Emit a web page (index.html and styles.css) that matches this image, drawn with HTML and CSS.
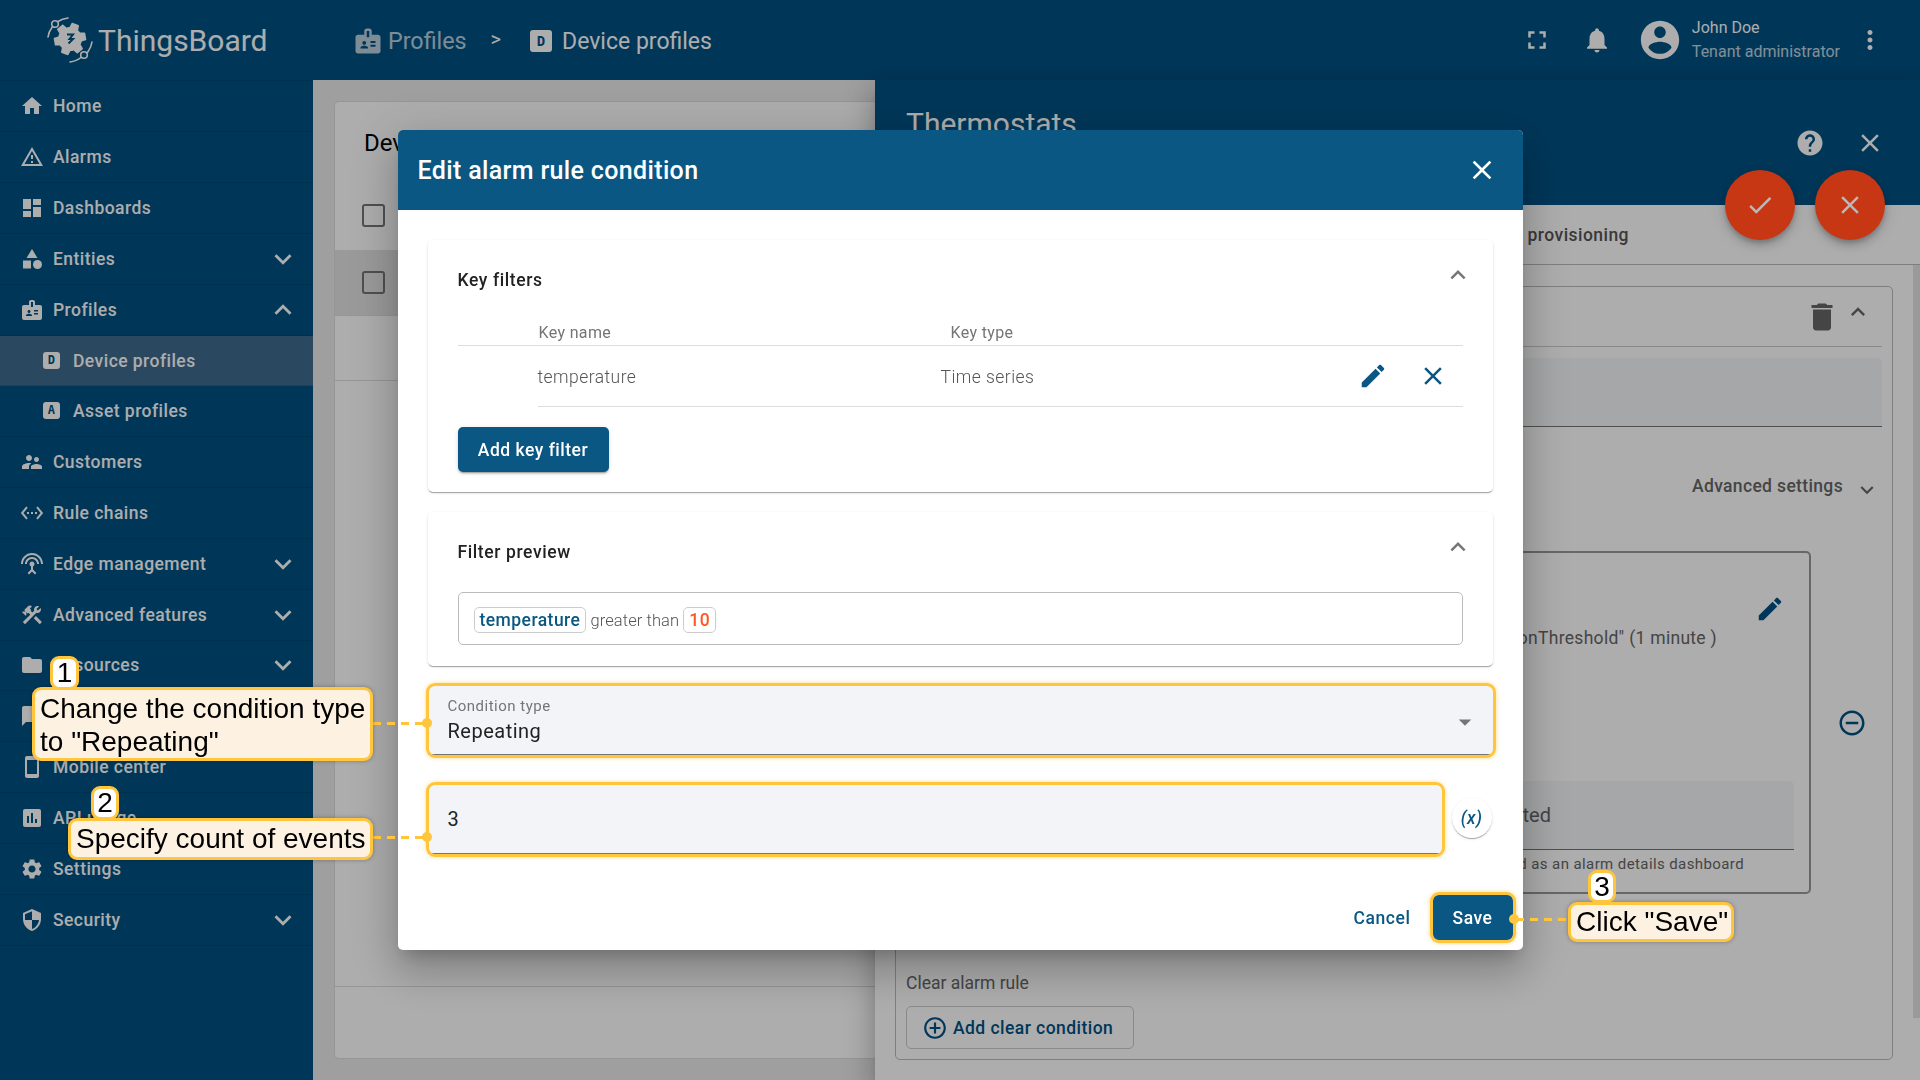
FILE: index.html
```html
<!DOCTYPE html>
<html lang="en">
<head>
    <meta charset="UTF-8">
    <title>Device profiles</title>
    <link rel="stylesheet" href="styles.css">
</head>
<body>
<svg class="sprite" xmlns="http://www.w3.org/2000/svg">
    <symbol id="i-home" viewBox="0 0 24 24"><path d="M10 20v-6h4v6h5v-8h3L12 3 2 12h3v8z"/></symbol>
    <symbol id="i-alarm" viewBox="0 0 24 24"><path d="M12 5.99L19.53 19H4.47L12 5.99M12 2L1 21h22L12 2zm1 14h-2v2h2v-2zm0-6h-2v4h2v-4z"/></symbol>
    <symbol id="i-dash" viewBox="0 0 24 24"><path d="M3 13h8V3H3v10zm0 8h8v-6H3v6zm10 0h8V11h-8v10zm0-18v6h8V3h-8z"/></symbol>
    <symbol id="i-entities" viewBox="0 0 24 24"><path d="M12 2l-5.5 9h11z"/><circle cx="17.5" cy="17.5" r="4.5"/><path d="M3 13.5h8v8H3z"/></symbol>
    <symbol id="i-badge" viewBox="0 0 24 24"><path d="M20 7h-5V4c0-1.1-.9-2-2-2h-2c-1.1 0-2 .9-2 2v3H4c-1.1 0-2 .9-2 2v11c0 1.1.9 2 2 2h16c1.1 0 2-.9 2-2V9c0-1.1-.9-2-2-2zM9 12c.83 0 1.5.67 1.5 1.5S9.83 15 9 15s-1.5-.67-1.5-1.5S8.17 12 9 12zm3 6H6v-.75c0-1 2-1.5 3-1.5s3 .5 3 1.5V18zm1-9h-2V4h2v5zm5 7.5h-4V15h4v1.5zm0-3h-4V12h4v1.5z"/></symbol>
    <symbol id="i-customers" viewBox="0 0 24 24"><path d="M16.5 12c1.38 0 2.49-1.12 2.49-2.5S17.88 7 16.5 7C15.12 7 14 8.12 14 9.5s1.12 2.5 2.5 2.5zM9 11c1.66 0 2.99-1.34 2.99-3S10.66 5 9 5C7.34 5 6 6.34 6 8s1.34 3 3 3zm7.5 3c-1.83 0-5.5.92-5.5 2.75V19h11v-2.25c0-1.83-3.67-2.75-5.5-2.75zM9 13c-2.33 0-7 1.17-7 3.5V19h7v-2.25c0-.85.33-2.34 2.37-3.47C10.5 13.1 9.66 13 9 13z"/></symbol>
    <symbol id="i-rule" viewBox="0 0 24 24"><path d="M7.77 6.76L6.23 5.48.82 12l5.41 6.52 1.54-1.28L3.42 12l4.35-5.24zM7 13h2v-2H7v2zm10-2h-2v2h2v-2zm-6 2h2v-2h-2v2zm6.77-7.52l-1.54 1.28L20.58 12l-4.35 5.24 1.54 1.28L23.18 12l-5.41-6.52z"/></symbol>
    <symbol id="i-edge" viewBox="0 0 24 24"><path d="M12 5c-3.87 0-7 3.13-7 7h2c0-2.76 2.24-5 5-5s5 2.24 5 5h2c0-3.87-3.13-7-7-7zm1 9.29c.88-.39 1.5-1.26 1.5-2.29 0-1.38-1.12-2.5-2.5-2.5S9.5 10.62 9.5 12c0 1.02.62 1.9 1.5 2.29v3.3L7.59 21 9 22.41l3-3 3 3L16.41 21 13 17.59v-3.3zM12 1C5.93 1 1 5.93 1 12h2c0-4.97 4.03-9 9-9s9 4.03 9 9h2c0-6.07-4.93-11-11-11z"/></symbol>
    <symbol id="i-tools" viewBox="0 0 24 24"><path d="M13.783 15.172l2.121-2.121 5.996 5.996-2.121 2.121zM17.5 10c1.93 0 3.5-1.57 3.5-3.5 0-.58-.16-1.12-.41-1.6l-2.7 2.7-1.49-1.49 2.7-2.7c-.48-.25-1.02-.41-1.6-.41C15.57 3 14 4.57 14 6.5c0 .41.08.8.21 1.16l-1.85 1.85-1.78-1.78.71-.71-1.41-1.41L12 3.49c-1.17-1.17-3.07-1.17-4.24 0L4.22 7.03l1.41 1.41H2.81l-.71.71 3.54 3.54.71-.71V9.15l1.41 1.41.71-.71 1.78 1.78-7.41 7.41 2.12 2.12L16.34 9.79c.36.13.75.21 1.16.21z"/></symbol>
    <symbol id="i-folder" viewBox="0 0 24 24"><path d="M10 4H4c-1.1 0-1.99.9-1.99 2L2 18c0 1.1.9 2 2 2h16c1.1 0 2-.9 2-2V8c0-1.1-.9-2-2-2h-8l-2-2z"/></symbol>
    <symbol id="i-chat" viewBox="0 0 24 24"><path d="M20 2H4c-1.1 0-2 .9-2 2v18l4-4h14c1.1 0 2-.9 2-2V4c0-1.1-.9-2-2-2z"/></symbol>
    <symbol id="i-phone" viewBox="0 0 24 24"><path d="M17 1.01L7 1c-1.1 0-2 .9-2 2v18c0 1.1.9 2 2 2h10c1.1 0 2-.9 2-2V3c0-1.1-.9-1.99-2-1.99zM17 19H7V5h10v14z"/></symbol>
    <symbol id="i-chart" viewBox="0 0 24 24"><path d="M19 3H5c-1.1 0-2 .9-2 2v14c0 1.1.9 2 2 2h14c1.1 0 2-.9 2-2V5c0-1.1-.9-2-2-2zM9 17H7v-7h2v7zm4 0h-2V7h2v10zm4 0h-2v-4h2v4z"/></symbol>
    <symbol id="i-gear" viewBox="0 0 24 24"><path d="M19.14 12.94c.04-.3.06-.61.06-.94 0-.32-.02-.64-.07-.94l2.03-1.58c.18-.14.23-.41.12-.61l-1.92-3.32c-.12-.22-.37-.29-.59-.22l-2.39.96c-.5-.38-1.03-.7-1.62-.94l-.36-2.54c-.04-.24-.24-.41-.48-.41h-3.84c-.24 0-.43.17-.47.41l-.36 2.54c-.59.24-1.13.57-1.62.94l-2.39-.96c-.22-.08-.47 0-.59.22L2.74 8.87c-.12.21-.08.47.12.61l2.03 1.58c-.05.3-.09.63-.09.94s.02.64.07.94l-2.03 1.58c-.18.14-.23.41-.12.61l1.92 3.32c.12.22.37.29.59.22l2.39-.96c.5.38 1.03.7 1.62.94l.36 2.54c.05.24.24.41.48.41h3.84c.24 0 .44-.17.47-.41l.36-2.54c.59-.24 1.13-.56 1.62-.94l2.39.96c.22.08.47 0 .59-.22l1.92-3.32c.12-.22.07-.47-.12-.61l-2.01-1.58zM12 15.6c-1.98 0-3.6-1.62-3.6-3.6s1.62-3.6 3.6-3.6 3.6 1.62 3.6 3.6-1.62 3.6-3.6 3.6z"/></symbol>
    <symbol id="i-shield" viewBox="0 0 24 24"><path d="M12 1L3 5v6c0 5.55 3.84 10.74 9 12 5.16-1.26 9-6.45 9-12V5l-9-4zm0 10.99h7c-.53 4.12-3.28 7.79-7 8.94V12H5V6.3l7-3.11v8.8z"/></symbol>
    <symbol id="i-more" viewBox="0 0 24 24"><path d="M16.59 8.59L12 13.17 7.41 8.59 6 10l6 6 6-6z"/></symbol>
    <symbol id="i-less" viewBox="0 0 24 24"><path d="M12 8l-6 6 1.41 1.41L12 10.83l4.59 4.58L18 14z"/></symbol>
    <symbol id="i-full" viewBox="0 0 24 24"><path d="M7 14H5v5h5v-2H7v-3zm-2-4h2V7h3V5H5v5zm12 7h-3v2h5v-5h-2v3zM14 5v2h3v3h2V5h-5z"/></symbol>
    <symbol id="i-bell" viewBox="0 0 24 24"><path d="M12 22c1.1 0 2-.9 2-2h-4c0 1.1.89 2 2 2zm6-6v-5c0-3.07-1.64-5.64-4.5-6.32V4c0-.83-.67-1.5-1.5-1.5s-1.5.67-1.5 1.5v.68C7.63 5.36 6 7.92 6 11v5l-2 2v1h16v-1l-2-2z"/></symbol>
    <symbol id="i-user" viewBox="0 0 24 24"><path d="M12 2C6.48 2 2 6.48 2 12s4.48 10 10 10 10-4.48 10-10S17.52 2 12 2zm0 3c1.66 0 3 1.34 3 3s-1.34 3-3 3-3-1.34-3-3 1.34-3 3-3zm0 14.2c-2.5 0-4.71-1.28-6-3.22.03-1.99 4-3.08 6-3.08 1.99 0 5.97 1.09 6 3.08-1.29 1.94-3.5 3.22-6 3.22z"/></symbol>
    <symbol id="i-vert" viewBox="0 0 24 24"><path d="M12 8c1.1 0 2-.9 2-2s-.9-2-2-2-2 .9-2 2 .9 2 2 2zm0 2c-1.1 0-2 .9-2 2s.9 2 2 2 2-.9 2-2-.9-2-2-2zm0 6c-1.1 0-2 .9-2 2s.9 2 2 2 2-.9 2-2-.9-2-2-2z"/></symbol>
    <symbol id="i-help" viewBox="0 0 24 24"><path d="M12 2C6.48 2 2 6.48 2 12s4.48 10 10 10 10-4.48 10-10S17.52 2 12 2zm1 17h-2v-2h2v2zm2.07-7.75l-.9.92C13.45 12.9 13 13.5 13 15h-2v-.5c0-1.1.45-2.1 1.17-2.83l1.24-1.26c.37-.36.59-.86.59-1.41 0-1.1-.9-2-2-2s-2 .9-2 2H8c0-2.21 1.79-4 4-4s4 1.79 4 4c0 .88-.36 1.68-.93 2.25z"/></symbol>
    <symbol id="i-close" viewBox="0 0 24 24"><path d="M19 6.41L17.59 5 12 10.59 6.41 5 5 6.41 10.59 12 5 17.59 6.41 19 12 13.41 17.59 19 19 17.59 13.41 12z"/></symbol>
    <symbol id="i-check" viewBox="0 0 24 24"><path d="M9 16.17L4.83 12l-1.42 1.41L9 19 21 7l-1.41-1.41z"/></symbol>
    <symbol id="i-edit" viewBox="0 0 24 24"><path d="M3 17.25V21h3.75L17.81 9.94l-3.75-3.75L3 17.25zM20.71 7.04c.39-.39.39-1.02 0-1.41l-2.34-2.34c-.39-.39-1.02-.39-1.41 0l-1.83 1.83 3.75 3.75 1.83-1.83z"/></symbol>
    <symbol id="i-delete" viewBox="0 0 24 24"><path d="M6 19c0 1.1.9 2 2 2h8c1.1 0 2-.9 2-2V7H6v12zM19 4h-3.5l-1-1h-5l-1 1H5v2h14V4z"/></symbol>
    <symbol id="i-minus" viewBox="0 0 24 24"><path d="M7 11v2h10v-2H7zm5-9C6.48 2 2 6.48 2 12s4.48 10 10 10 10-4.48 10-10S17.52 2 12 2zm0 18c-4.41 0-8-3.59-8-8s3.59-8 8-8 8 3.59 8 8-3.59 8-8 8z"/></symbol>
    <symbol id="i-plus" viewBox="0 0 24 24"><path d="M13 7h-2v4H7v2h4v4h2v-4h4v-2h-4V7zm-1-5C6.48 2 2 6.48 2 12s4.48 10 10 10 10-4.48 10-10S17.52 2 12 2zm0 18c-4.41 0-8-3.59-8-8s3.59-8 8-8 8 3.59 8 8-3.59 8-8 8z"/></symbol>
    <symbol id="i-drop" viewBox="0 0 24 24"><path d="M7 10l5 5 5-5z"/></symbol>
</svg>

<div class="app">
    <aside class="sidebar">
        <div class="logo">
            <svg class="logo-mark" viewBox="0 0 46 46">
                <g fill="none" stroke="currentColor" stroke-width="1.6" stroke-linecap="round">
                    <circle cx="8" cy="7" r="3.3"/>
                    <circle cx="37" cy="38" r="3.3"/>
                    <path d="M11 4.500C14 2.500 17 1.500 21 1"/>
                    <path d="M5.500 9.500C3 13 1.500 16 1 20"/>
                    <path d="M34 40.500C31 43 27 44.500 23 45"/>
                    <path d="M40.500 35.500C43 32 44.500 29 45 25"/>
                </g>
                <use href="#i-gear" x="3" y="2" width="40" height="40" transform="rotate(20 23 22)"/>
                <circle cx="23" cy="22" r="9"/>
                <path class="logo-tick" d="M20 17.500h6l-3.500 4.500h3.500l-4.500 4.500"/>
            </svg>
            <span class="logo-text">ThingsBoard</span>
        </div>
        <nav class="nav">
            <a class="nav-item"><svg class="ico"><use href="#i-home"/></svg><span>Home</span></a>
            <a class="nav-item"><svg class="ico"><use href="#i-alarm"/></svg><span>Alarms</span></a>
            <a class="nav-item"><svg class="ico"><use href="#i-dash"/></svg><span>Dashboards</span></a>
            <a class="nav-item"><svg class="ico"><use href="#i-entities"/></svg><span>Entities</span><svg class="ico-arrow"><use href="#i-more"/></svg></a>
            <a class="nav-item"><svg class="ico"><use href="#i-badge"/></svg><span>Profiles</span><svg class="ico-arrow"><use href="#i-less"/></svg></a>
            <a class="nav-item sub current"><i class="sub-icon">D</i><span>Device profiles</span></a>
            <a class="nav-item sub"><i class="sub-icon">A</i><span>Asset profiles</span></a>
            <a class="nav-item"><svg class="ico"><use href="#i-customers"/></svg><span>Customers</span></a>
            <a class="nav-item"><svg class="ico"><use href="#i-rule"/></svg><span>Rule chains</span></a>
            <a class="nav-item"><svg class="ico"><use href="#i-edge"/></svg><span>Edge management</span><svg class="ico-arrow"><use href="#i-more"/></svg></a>
            <a class="nav-item"><svg class="ico"><use href="#i-tools"/></svg><span>Advanced features</span><svg class="ico-arrow"><use href="#i-more"/></svg></a>
            <a class="nav-item"><svg class="ico"><use href="#i-folder"/></svg><span>Resources</span><svg class="ico-arrow"><use href="#i-more"/></svg></a>
            <a class="nav-item"><svg class="ico"><use href="#i-chat"/></svg><span>Notification center</span></a>
            <a class="nav-item"><svg class="ico"><use href="#i-phone"/></svg><span>Mobile center</span></a>
            <a class="nav-item"><svg class="ico"><use href="#i-chart"/></svg><span>API usage</span></a>
            <a class="nav-item"><svg class="ico"><use href="#i-gear"/></svg><span>Settings</span></a>
            <a class="nav-item"><svg class="ico"><use href="#i-shield"/></svg><span>Security</span><svg class="ico-arrow"><use href="#i-more"/></svg></a>
        </nav>
    </aside>

    <main class="main">
        <header class="toolbar">
            <div class="crumbs">
                <svg class="crumb-icon dim"><use href="#i-badge"/></svg>
                <span class="crumb dim">Profiles</span>
                <span class="crumb-sep">&gt;</span>
                <i class="crumb-letter">D</i>
                <span class="crumb">Device profiles</span>
            </div>
            <div class="tools">
                <svg class="tool-ico full"><use href="#i-full"/></svg>
                <svg class="tool-ico bell"><use href="#i-bell"/></svg>
                <svg class="avatar"><use href="#i-user"/></svg>
                <div class="who">
                    <div class="who-name">John Doe</div>
                    <div class="who-role">Tenant administrator</div>
                </div>
                <svg class="tool-ico vert"><use href="#i-vert"/></svg>
            </div>
        </header>
        <section class="content">
            <div class="list-card">
                <div class="list-title">Device profiles</div>
                <div class="list-row head"><span class="checkbox"></span></div>
                <div class="list-row selected"><span class="checkbox"></span></div>
                <div class="list-row"></div>
                <div class="list-space"></div>
                <div class="list-foot"></div>
            </div>
        </section>
    </main>

    <aside class="drawer">
        <div class="drawer-head">
            <div class="drawer-title">Thermostats</div>
            <svg class="head-ico help"><use href="#i-help"/></svg>
            <svg class="head-ico close"><use href="#i-close"/></svg>
        </div>
        <button class="fab check"><svg><use href="#i-check"/></svg></button>
        <button class="fab cancel"><svg><use href="#i-close"/></svg></button>
        <div class="drawer-tabs"><span>Device provisioning</span></div>
        <div class="drawer-scroll">
            <div class="rule-card">
                <div class="rule-head">
                    <svg class="rule-del"><use href="#i-delete"/></svg>
                    <svg class="rule-less"><use href="#i-less"/></svg>
                </div>
                <div class="rule-field"></div>
                <div class="rule-adv"><span>Advanced settings</span><svg><use href="#i-more"/></svg></div>
                <div class="rule-cond">
                    <div class="cond-box">
                        <svg class="cond-edit"><use href="#i-edit"/></svg>
                        <div class="cond-text">temperature during "durationThreshold" (1 minute )</div>
                        <div class="cond-field"><span>Not selected</span></div>
                        <div class="cond-hint">Used as an alarm details dashboard</div>
                    </div>
                    <svg class="cond-minus"><use href="#i-minus"/></svg>
                </div>
                <div class="clear-label">Clear alarm rule</div>
                <button class="clear-btn"><svg><use href="#i-plus"/></svg>Add clear condition</button>
            </div>
            <div class="scrollbar"></div>
        </div>
    </aside>
</div>

<div class="backdrop"></div>

<div class="dialog-wrap">
    <div class="dialog">
        <div class="dialog-head">
            <h2>Edit alarm rule condition</h2>
            <svg class="dialog-close"><use href="#i-close"/></svg>
        </div>
        <div class="dialog-body">
            <div class="panel">
                <div class="panel-head"><span>Key filters</span><svg><use href="#i-less"/></svg></div>
                <div class="key-head"><span class="col-name">Key name</span><span>Key type</span></div>
                <div class="key-row">
                    <span class="col-value">temperature</span>
                    <span>Time series</span>
                    <div class="key-actions">
                        <svg><use href="#i-edit"/></svg>
                        <svg><use href="#i-close"/></svg>
                    </div>
                </div>
                <button class="btn add-key">Add key filter</button>
            </div>
            <div class="panel">
                <div class="panel-head"><span>Filter preview</span><svg><use href="#i-less"/></svg></div>
                <div class="preview">
                    <span class="chip key">temperature</span>
                    <span class="op">greater than</span>
                    <span class="chip val">10</span>
                </div>
            </div>
            <div class="field select">
                <label>Condition type</label>
                <div class="field-value">Repeating</div>
                <svg><use href="#i-drop"/></svg>
            </div>
            <div class="count-row">
                <div class="field count"><div class="field-value">3</div></div>
                <button class="var-btn">(x)</button>
            </div>
            <div class="dialog-foot">
                <button class="btn-text">Cancel</button>
                <button class="btn save">Save</button>
            </div>
        </div>
    </div>
</div>

<div class="notes">
    <div class="ring ring-type"></div>
    <div class="ring ring-count"></div>
    <div class="ring ring-save"></div>
    <div class="dash dash-1"></div>
    <div class="dash dash-2"></div>
    <div class="dash dash-3"></div>
    <div class="dot dot-1"></div>
    <div class="dot dot-2"></div>
    <div class="dot dot-3"></div>
    <div class="callout call-1">Change the condition type<br>to "Repeating"</div>
    <div class="badge badge-1">1</div>
    <div class="callout call-2">Specify count of events</div>
    <div class="badge badge-2">2</div>
    <div class="callout call-3">Click "Save"</div>
    <div class="badge badge-3">3</div>
</div>
</body>
</html>
```

FILE: styles.css
```css
* {
    box-sizing: border-box;
    margin: 0;
    padding: 0;
}

html, body {
    width: 1920px;
    height: 1080px;
    overflow: hidden;
}

body {
    font-family: Roboto, "Liberation Sans", sans-serif;
    color: #222;
    background: #eaeaea;
}

button {
    border: 0;
    background: none;
    font-family: inherit;
}

svg {
    fill: currentColor;
    display: block;
}

.sprite {
    display: none;
}

.app {
    display: flex;
    width: 1920px;
    height: 1080px;
    position: relative;
}

/* sidebar */
.sidebar {
    width: 313px;
    flex: none;
    background: #005184;
    color: #fff;
}

.logo {
    height: 81px;
    display: flex;
    align-items: center;
    padding-left: 47px;
    border-bottom: 1px solid rgba(0, 0, 0, .1);
}

.logo-mark {
    width: 46px;
    height: 46px;
    margin-right: 5px;
}

.logo-tick {
    fill: none;
    stroke: #005184;
    stroke-width: 2;
}

.logo-text {
    font-size: 30px;
}

.nav-item {
    height: 50.97px;
    display: flex;
    align-items: center;
    padding-left: 20px;
    font-size: 17.5px;
    font-weight: 500;
    letter-spacing: .45px;
    border-bottom: 1px solid rgba(0, 0, 0, .1);
}

.nav-item .ico {
    width: 24px;
    height: 24px;
    margin-right: 9px;
    flex: none;
}

.ico-arrow {
    width: 34px;
    height: 34px;
    margin-left: auto;
    margin-right: 13px;
}

.nav-item.sub {
    height: 50.4px;
    padding-left: 43px;
}

.nav-item.current {
    background: #3e6a8e;
}

.sub-icon {
    width: 17px;
    height: 17px;
    margin-right: 13px;
    flex: none;
    border-radius: 3px;
    background: #fff;
    color: #005184;
    font: 700 12px/17px "DejaVu Sans Mono", monospace;
    text-align: center;
}

/* top bar */
.main {
    flex: 1;
    display: flex;
    flex-direction: column;
    min-width: 0;
}

.toolbar {
    height: 80px;
    flex: none;
    background: #005184;
    color: #fff;
    display: flex;
    align-items: center;
    justify-content: space-between;
    padding-left: 40px;
}

.crumbs {
    display: flex;
    align-items: center;
    font-size: 23.3px;
    padding-top: 2px;
}

.crumb-icon {
    width: 30px;
    height: 30px;
    margin-right: 5px;
}

.crumb:last-child {
    font-size: 23px;
}

.dim {
    opacity: .72;
}

.crumb-sep {
    font-size: 20px;
    margin: 0 29px 4px 24px;
}

.crumb-letter {
    width: 22px;
    height: 22px;
    margin-right: 10px;
    border-radius: 3px;
    background: #fff;
    color: #005184;
    font: 700 14px/22px "DejaVu Sans Mono", monospace;
    text-align: center;
}

.tools {
    display: flex;
    align-items: center;
    padding-right: 35px;
}

.tool-ico {
    width: 30px;
    height: 30px;
}

.tool-ico.bell {
    margin-left: 30px;
}

.avatar {
    width: 46px;
    height: 46px;
    margin-left: 25px;
}

.who {
    margin-left: 9px;
    font-size: 16px;
    line-height: 24px;
}

.who-role {
    opacity: .75;
}

.tool-ico.vert {
    margin-left: 15px;
}

/* device profile list behind the drawer */
.content {
    flex: 1;
    padding: 21px;
    min-height: 0;
}

.list-card {
    height: 100%;
    background: #fff;
    border-radius: 5px;
    border: 1px solid #ddd;
    display: flex;
    flex-direction: column;
}

.list-title {
    height: 81px;
    flex: none;
    padding: 21px 0 0 29px;
    font-size: 24px;
    line-height: 40px;
    color: #000;
}

.list-row {
    height: 65px;
    flex: none;
    display: flex;
    align-items: center;
    padding-left: 27px;
    border-bottom: 1px solid #ddd;
}

.list-row.head {
    height: 67px;
    padding-bottom: 2px;
    border-bottom: 0;
}

.list-row.selected {
    height: 66px;
    background: #e3e3e3;
}

.checkbox {
    width: 23px;
    height: 23px;
    border: 2px solid #757575;
    border-radius: 3px;
}

.list-space {
    flex: 1;
    border-bottom: 1px solid #ddd;
}

.list-foot {
    height: 71px;
    flex: none;
}

/* right drawer */
.drawer {
    position: absolute;
    left: 875px;
    top: 80px;
    right: 0;
    bottom: 0;
    background: #fff;
    display: flex;
    flex-direction: column;
    box-shadow: 0 8px 10px -5px rgba(0, 0, 0, .2), 0 16px 24px 2px rgba(0, 0, 0, .14), 0 6px 30px 5px rgba(0, 0, 0, .12);
}

.drawer-head {
    height: 125px;
    flex: none;
    background: #005184;
    color: #fff;
    display: flex;
    align-items: flex-start;
    padding: 0 35px 0 31px;
}

.drawer-title {
    flex: 1;
    margin-top: 24px;
    font-size: 30px;
    line-height: 40px;
}

.head-ico {
    margin-top: 48px;
    width: 30px;
    height: 30px;
}

.head-ico.close {
    margin-left: 30px;
}

/* the action buttons keep their colour above the backdrop */
.fab {
    position: absolute;
    z-index: 2;
    top: 90px;
    width: 70px;
    height: 70px;
    border-radius: 50%;
    background: #c83714;
    color: #b9b9b9;
    display: flex;
    align-items: center;
    justify-content: center;
    box-shadow: 0 3px 5px -1px rgba(0, 0, 0, .2), 0 6px 10px 0 rgba(0, 0, 0, .14), 0 1px 18px 0 rgba(0, 0, 0, .12);
}

.fab svg {
    width: 30px;
    height: 30px;
}

.fab.check {
    right: 125px;
}

.fab.cancel {
    right: 35px;
}

.drawer-tabs {
    height: 60px;
    flex: none;
    display: flex;
    align-items: center;
    justify-content: flex-end;
    padding-right: 291px;
    font-size: 17.5px;
    font-weight: 500;
    letter-spacing: .45px;
    color: #555;
    border-bottom: 1px solid #bbb;
}

.drawer-scroll {
    flex: 1;
    display: flex;
    min-height: 0;
    background: #fff;
}

.rule-card {
    flex: 1;
    margin: 21px 20px 20px 20px;
    padding: 0 10px;
    border: 1px solid #bbb;
    border-radius: 5px;
    display: flex;
    flex-direction: column;
}

.rule-head {
    height: 60px;
    flex: none;
    display: flex;
    align-items: flex-start;
    justify-content: flex-end;
    padding: 12px 10px 0 0;
    border-bottom: 1px solid #ccc;
    color: #666;
}

.rule-del {
    width: 36px;
    height: 36px;
    color: #666;
}

.rule-less {
    width: 28px;
    height: 28px;
    margin-left: 4px;
    margin-top: -1px;
}

.rule-field {
    height: 69px;
    flex: none;
    margin-top: 11px;
    background: #f5f6f8;
    border-bottom: 1px solid #757575;
    border-radius: 5px 5px 0 0;
}

.rule-adv {
    height: 124px;
    flex: none;
    padding: 49px 0 0 0;
    display: flex;
    justify-content: flex-end;
    font-size: 17.5px;
    font-weight: 500;
    letter-spacing: .35px;
    color: #666;
}

.rule-adv svg {
    width: 26px;
    height: 26px;
    margin: 1px 2px 0 11px;
    color: #666;
}

.rule-cond {
    height: 343px;
    flex: none;
    display: flex;
    align-items: center;
}

.cond-box {
    flex: 1;
    height: 100%;
    border: 2px solid #999;
    border-radius: 5px;
    display: flex;
    flex-direction: column;
    align-items: flex-end;
    color: #666;
}

.cond-edit {
    width: 30px;
    height: 30px;
    margin: 41px 24px 0 0;
    color: #005184;
}

.cond-text {
    margin: 1px 92px 0 0;
    font-size: 17.5px;
    line-height: 26px;
    letter-spacing: .3px;
}

.cond-field {
    height: 69px;
    width: calc(100% - 15px);
    margin: 130px 15px 0 0;
    display: flex;
    align-items: center;
    justify-content: flex-end;
    padding-right: 243px;
    background: #f5f6f8;
    border-bottom: 1px solid #757575;
    border-radius: 5px 5px 0 0;
    font-size: 20px;
}

.cond-hint {
    margin: 5px 65px 0 0;
    font-size: 15px;
    letter-spacing: .4px;
}

.cond-minus {
    width: 30px;
    height: 30px;
    margin: 0 15px 0 26px;
    color: #005184;
    flex: none;
}

.clear-label {
    margin-top: 77px;
    font-size: 17.5px;
    line-height: 24px;
    color: #666;
}

.clear-btn {
    width: 228px;
    height: 43px;
    margin-top: 11px;
    flex: none;
    display: flex;
    align-items: center;
    padding-left: 15px;
    border: 1px solid #ccc;
    border-radius: 5px;
    font-size: 17.5px;
    font-weight: 500;
    letter-spacing: .45px;
    color: #005184;
}

.clear-btn svg {
    width: 26px;
    height: 26px;
    margin-right: 5px;
}

.scrollbar {
    width: 7px;
    height: 753px;
    flex: none;
    background: #e3e3e3;
}

/* backdrop and dialog */
.backdrop {
    position: fixed;
    z-index: 1;
    inset: 0;
    background: rgba(0, 0, 0, .32);
}

.dialog-wrap {
    position: fixed;
    z-index: 3;
    inset: 0;
    display: flex;
    align-items: center;
    justify-content: center;
}

.dialog {
    width: 1125px;
    height: 820px;
    background: #fff;
    border-radius: 5px;
    overflow: hidden;
    display: flex;
    flex-direction: column;
    box-shadow: 0 11px 15px -7px rgba(0, 0, 0, .2), 0 24px 38px 3px rgba(0, 0, 0, .14), 0 9px 46px 8px rgba(0, 0, 0, .12);
}

.dialog-head {
    height: 80px;
    flex: none;
    background: #0a5783;
    color: #fff;
    display: flex;
    align-items: center;
    justify-content: space-between;
    padding: 0 25px 0 20px;
}

.dialog-head h2 {
    font-size: 25px;
    font-weight: 500;
    letter-spacing: .35px;
}

.dialog-close {
    width: 32px;
    height: 32px;
}

.dialog-body {
    flex: 1;
    padding: 30px 30px 0;
    display: flex;
    flex-direction: column;
}

.panel {
    padding: 0 30px 20px;
    border-radius: 5px;
    box-shadow: 0 2px 1px -1px rgba(0, 0, 0, .2), 0 1px 1px 0 rgba(0, 0, 0, .14), 0 1px 3px 0 rgba(0, 0, 0, .12);
    margin-bottom: 20px;
}

.panel-head {
    height: 80px;
    display: flex;
    align-items: center;
    justify-content: space-between;
    font-size: 17.5px;
    font-weight: 500;
    letter-spacing: .6px;
}

.panel-head svg {
    width: 30px;
    height: 30px;
    margin: 0 -10px 10px 0;
    color: #757575;
}

.key-head {
    height: 26px;
    display: flex;
    align-items: center;
    padding-left: 81px;
    font-size: 16px;
    letter-spacing: .35px;
    color: #757575;
    border-bottom: 1px solid #ddd;
}

.col-name {
    width: 412px;
}

.key-row {
    height: 61px;
    margin-left: 80px;
    padding-top: 2px;
    display: flex;
    align-items: center;
    font-size: 17.5px;
    font-weight: 300;
    letter-spacing: .45px;
    color: #555;
    border-bottom: 1px solid #ddd;
}

.col-value {
    width: 403px;
}

.key-actions {
    margin-left: auto;
    margin-top: -2px;
    padding-right: 15px;
    display: flex;
    gap: 30px;
    color: #0a5783;
}

.key-actions svg {
    width: 30px;
    height: 30px;
}

.btn {
    background: #0a5783;
    color: #fff;
    height: 45px;
    border-radius: 5px;
    font-size: 17.5px;
    font-weight: 500;
    letter-spacing: .5px;
    box-shadow: 0 3px 1px -2px rgba(0, 0, 0, .2), 0 2px 2px 0 rgba(0, 0, 0, .14), 0 1px 5px 0 rgba(0, 0, 0, .12);
}

.add-key {
    width: 151px;
    margin-top: 20px;
    display: block;
}

.preview {
    height: 53px;
    margin-bottom: 1px;
    padding: 2px 0 0 15px;
    display: flex;
    align-items: center;
    gap: 4px;
    border: 1px solid #bbb;
    border-radius: 5px;
}

.chip {
    height: 26px;
    padding: 0 5px;
    border: 1px solid #ccc;
    border-radius: 5px;
    font-size: 17.5px;
    font-weight: 500;
    line-height: 24px;
    letter-spacing: .45px;
}

.chip.key {
    color: #0a5783;
}

.chip.val {
    color: #ff5722;
}

.op {
    font-size: 16.5px;
    font-weight: 300;
    letter-spacing: .1px;
    color: #555;
    padding-top: 1px;
}

.field {
    height: 69px;
    position: relative;
    background: #f3f4f8;
    border-bottom: 1px solid #757575;
    border-radius: 5px 5px 0 0;
    padding: 0 20px;
}

.field label {
    display: block;
    padding-top: 11px;
    font-size: 15px;
    line-height: 18px;
    letter-spacing: .5px;
    color: #757575;
}

.field-value {
    font-size: 20px;
    line-height: 30px;
    letter-spacing: .5px;
    color: #222;
    padding-top: 1px;
}

.field.select svg {
    position: absolute;
    right: 13px;
    top: 21px;
    width: 30px;
    height: 30px;
    color: #757575;
}

.count-row {
    display: flex;
    align-items: center;
    margin-top: 30px;
}

.field.count {
    flex: none;
    width: 1014px;
    padding-top: 18px;
}

.var-btn {
    width: 40px;
    height: 40px;
    margin: -3px 0 0 10px;
    border-radius: 50%;
    background: #fff;
    font-size: 17.5px;
    font-style: italic;
    font-weight: 500;
    letter-spacing: .45px;
    color: #0a5783;
    box-shadow: 0 2px 1px -1px rgba(0, 0, 0, .2), 0 1px 1px 0 rgba(0, 0, 0, .14), 0 1px 3px 0 rgba(0, 0, 0, .12);
}

.dialog-foot {
    margin: 41px -20px 0 0;
    display: flex;
    justify-content: flex-end;
    gap: 2px;
}

.btn-text {
    width: 97px;
    height: 45px;
    font-size: 17.5px;
    font-weight: 500;
    letter-spacing: .6px;
    color: #0a5783;
}

.save {
    width: 80px;
}

/* tutorial notes drawn on top of the page */
.notes {
    position: fixed;
    z-index: 4;
    inset: 0;
    font-family: "Liberation Sans", Arial, sans-serif;
    color: #000;
}

.ring {
    position: absolute;
    border: 3px solid #ffc53d;
    border-radius: 9px;
    box-shadow: 0 0 4px rgba(255, 197, 61, .6);
}

.ring-type {
    left: 426px;
    top: 683px;
    width: 1070px;
    height: 75px;
}

.ring-count {
    left: 426px;
    top: 782px;
    width: 1019px;
    height: 75px;
}

.ring-save {
    left: 1430px;
    top: 892px;
    width: 86px;
    height: 51px;
}

.dash {
    position: absolute;
    height: 3px;
    background: repeating-linear-gradient(to right, #ffc53d 0 8px, transparent 8px 14px);
}

.dash-1 {
    left: 373px;
    top: 722px;
    width: 54px;
}

.dash-2 {
    left: 373px;
    top: 836px;
    width: 54px;
}

.dash-3 {
    left: 1516px;
    top: 918px;
    width: 52px;
}

.dot {
    position: absolute;
    width: 10px;
    height: 10px;
    border-radius: 50%;
    background: #ffc53d;
}

.dot-1 {
    left: 422px;
    top: 718px;
}

.dot-2 {
    left: 422px;
    top: 832px;
}

.dot-3 {
    left: 1509px;
    top: 914px;
}

.callout {
    position: absolute;
    background: #fdf1e1;
    border: 3px solid #ffc53d;
    border-radius: 9px;
    font-size: 28px;
    line-height: 33px;
    padding: 2px 5px;
    white-space: nowrap;
    box-shadow: 0 0 4px rgba(0, 0, 0, .3);
}

.call-1 {
    left: 32px;
    top: 687px;
    width: 341px;
    height: 74px;
}

.call-2 {
    left: 68px;
    top: 818px;
    width: 305px;
    height: 42px;
    padding-top: 1px;
}

.call-3 {
    left: 1568px;
    top: 902px;
    width: 166px;
    height: 40px;
    padding-top: 0;
}

.badge {
    position: absolute;
    background: #fff;
    border: 3px solid #ffc53d;
    border-radius: 9px;
    font-size: 28px;
    line-height: 28px;
    text-align: center;
}

.badge-1 {
    left: 50px;
    top: 656px;
    width: 29px;
    height: 34px;
}

.badge-2 {
    left: 91px;
    top: 786px;
    width: 28px;
    height: 34px;
}

.badge-3 {
    left: 1588px;
    top: 870px;
    width: 28px;
    height: 33px;
}
```
